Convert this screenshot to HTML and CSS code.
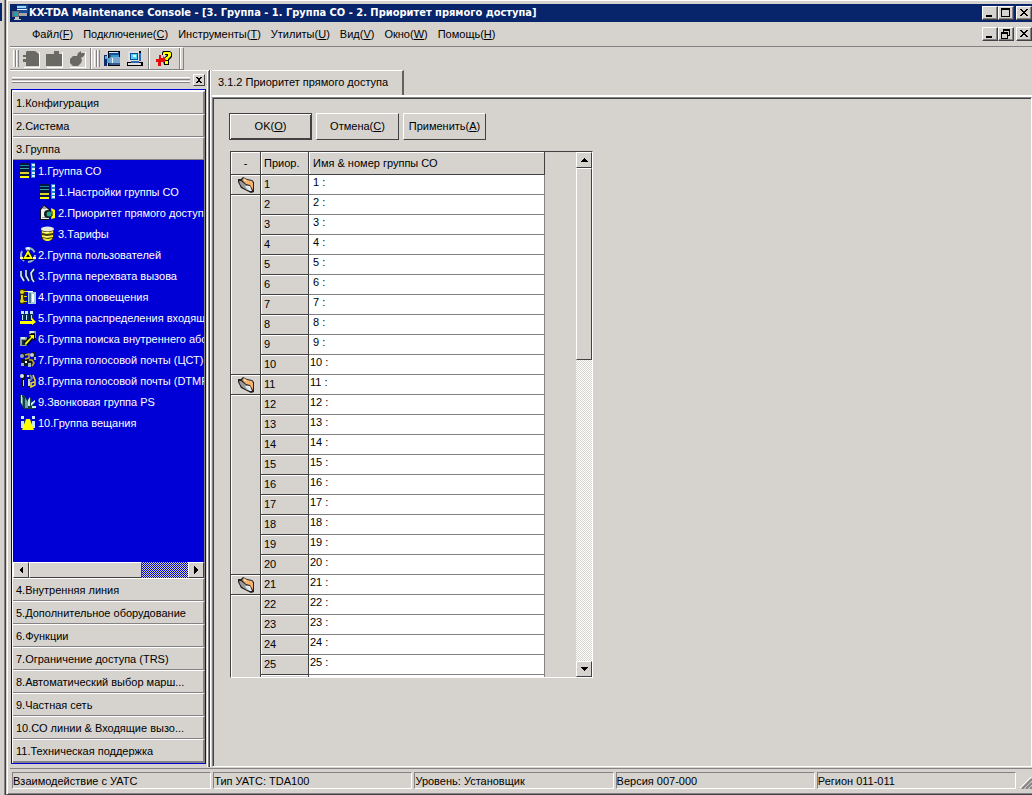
FILE: index.html
```html
<!DOCTYPE html>
<html lang="ru">
<head>
    <meta charset="utf-8">
    <title>KX-TDA Maintenance Console</title>
    <link rel="stylesheet" href="styles.css">
</head>
<body>
    <!-- Icons -->
    <svg class="sprites" aria-hidden="true">
        <symbol id="i-app" viewBox="0 0 16 16">
            <path fill="#184c94" d="M5 0h11v8H5z"/><path fill="#9cd7f7" d="M5 1h9v2H5z"/><path fill="#e7f3ff" d="M5 4h10v1H5z"/>
            <path fill="#6b6d73" d="M0 6h7v6H0z"/><path fill="#a5a6a5" d="M7 8h8v3H7z"/><path fill="#299cb5" d="M2 7h4v4H2z"/>
            <path fill="#c6c7c6" d="M3 12h4v2H3zM2 14h7v1H2z"/>
        </symbol>
        <symbol id="i-import" viewBox="0 0 16 16"><path d="M4 0h8l4 3v12H3v-4H0V8h3V6H0V4h3V1z"/></symbol>
        <symbol id="i-folder" viewBox="0 0 16 16"><path d="M0 3h8V0h5v3h3v12H0z"/></symbol>
        <symbol id="i-bomb" viewBox="0 0 16 16"><path d="M9 2l3-2v2h4l-1 3-3 2 1 2-1 3-3 3H4l-3-3V8l3-3h4z"/></symbol>
        <symbol id="i-pbx" viewBox="0 0 16 16">
            <path fill="#000" d="M4 0h12v15H4z"/><path fill="#184c94" d="M5 1h10v13H5z"/><path fill="#cef" d="M5 1h9v1H5z"/><path fill="#39c" d="M7 4h8v2H7z"/>
            <path fill="#7ba6d0" d="M6 6h10v6H6z"/><path fill="#102d73" d="M0 4h3v11H0z"/><path fill="#5ac" d="M1 5h2v3H1zM3 7h3v5H3z"/><path fill="#dff" d="M8 7h1v5H8z"/><path fill="#315d94" d="M7 12h9v2H7z"/>
        </symbol>
        <symbol id="i-pc" viewBox="0 0 16 16">
            <path fill="#000" d="M3 0h11v10H3zM0 11h16v4H0z"/><path fill="#dedfde" d="M1 0h11v10H1zM1 12h13v2H1z"/><path fill="#104c94" d="M3 2h8v7H3z"/>
            <path fill="#42d7f7" d="M4 3h6v5H4z"/><path fill="#fff" d="M6 4h3v2H6z"/><path fill="#2869b7" d="M12 2h2v8h-2zM4 10h8v2H4z"/>
        </symbol>
        <symbol id="i-help" viewBox="0 0 16 16">
            <path fill="#000" d="M7 0h7l2 2v4l-3 3v5H8V7l3-3H6V2z"/><path fill="#ff0" d="M8 1h6l1 1v3l-3 3v1H9V7l3-2V3H9v1H7V2zM9 10h3v3H9z"/>
            <path fill="#e70808" d="M3 4h2v3h2V5l3 4-3 4v-2H5v4H2v-4H0V8h3z"/>
        </symbol>
        <symbol id="i-co" viewBox="0 0 16 16">
            <path fill="#031840" d="M0 0h9v15H0z"/><path fill="#188ca5" d="M0 2h9v1H0z"/><path fill="#42a59b" d="M0 5h9v1H0z"/><path fill="#dcd326" d="M0 9h9v2H0z"/><path fill="#ffff08" d="M0 13h9v2H0z"/>
            <path fill="#188ccc" d="M11 0h4v15h-4z"/><path fill="#d7f1ff" d="M12 1h3v2h-3zM12 5h3v2h-3zM12 9h3v2h-3zM12 12h3v2h-3z"/>
        </symbol>
        <symbol id="i-prio" viewBox="0 0 16 16">
            <path fill="#10101d" d="M0 15V4l4-4 6 4v11z"/><path fill="#f0f0f0" d="M1 14V5l3-4 5 4v9z"/><path fill="#9c9e9c" d="M3 2h3v2H3zM2 12h7v1H2z"/>
            <circle cx="8" cy="9" r="4" fill="#10201d"/><circle cx="9" cy="9" r="2.5" fill="#29a58c"/><path fill="#ff0" d="M11 3l4 2v8l-4 1 1-4z"/><path fill="#8c8410" d="M12 6h1v5h-1z"/>
        </symbol>
        <symbol id="i-tariff" viewBox="0 0 16 16">
            <path fill="#423c00" d="M1 2h13v6l-1 5-3 2H5l-3-2-1-5z"/><ellipse cx="7.5" cy="3" rx="6.5" ry="2.5" fill="#e7e7de"/><path fill="#f7e739" d="M2 5l5 2 6-2v2l-6 1-5-1zM2 9l5 1 6-1v2l-6 1-5-1zM3 12l5 1 4-1v1l-3 2H6l-3-2z"/><path fill="#ffffa5" d="M4 6h5v1H4zM4 10h5v1H4z"/>
        </symbol>
        <symbol id="i-users" viewBox="0 0 16 16">
            <circle cx="8" cy="8" r="7" fill="none" stroke="#94b5bd" stroke-width="2" stroke-dasharray="11 4"/><circle cx="8" cy="2" r="2" fill="#e7f7ff"/><path fill="#000" d="M8 2l6 11H2z"/><path fill="#ff0" fill-rule="evenodd" d="M8 3l5 9H3zM8 7l-2 3h4z"/><path fill="#ffff9c" d="M0 10h3v2H0zM13 10h3v2h-3z"/>
        </symbol>
        <symbol id="i-pickup" viewBox="0 0 16 16">
            <path fill="none" stroke="#081852" stroke-width="3" d="M2 3v5l3 5M7 2v6l3 5M14 1l-2 4 1 6 2 2"/><path fill="none" stroke="#d6efff" stroke-width="1.6" d="M1 3v5l3 5M6 2v6l3 5M14 1l-3 4 1 6 2 3"/>
        </symbol>
        <symbol id="i-page" viewBox="0 0 16 16">
            <path fill="#2b2900" d="M0 0h6v15H0z"/><circle cx="2" cy="3" r="2" fill="#e7d518"/><circle cx="2" cy="12" r="2" fill="#e7d518"/><path fill="#e7d518" d="M1 6h2v4H1zM4 2h3v1H4zM4 7h3v1H4zM4 12h3v1H4z"/>
            <path fill="#a5cede" d="M8 3h8v12H8z"/><path fill="#527b9c" d="M9 4h2v10H9z"/><path fill="#f7ffff" d="M12 5h2v8h-2zM7 2h6v1H7z"/>
        </symbol>
        <symbol id="i-icd" viewBox="0 0 16 16">
            <path fill="#102d52" d="M2 3h3v7H2zM6 3h3v7H6zM10 3h4v7h-4z"/><path fill="#bde7f7" d="M1 1h3v3H1zM5 1h3v3H5zM10 1h3v3h-3zM2 5h1v5H2zM6 5h1v5H6zM11 5h1v5h-1z"/><path fill="#ff0" d="M0 11h12V8l4 4-4 3v-1H0z"/>
        </symbol>
        <symbol id="i-hunt" viewBox="0 0 16 16">
            <path fill="#8c9ea5" d="M9 0h7v7H9zM0 6h7v9H0z"/><path fill="#18283b" d="M11 2h4v4h-4zM2 9h3v5H2z"/><path fill="#cee7e7" d="M10 0h4v2h-4zM1 6h4v2H1z"/>
            <path fill="#000" d="M4 11l6-6-2-2h7v7l-2-2-6 7z"/><path fill="#ff0" d="M5 12l6-6-1-2h4v4l-2-1-6 7z"/>
        </symbol>
        <symbol id="i-vm1" viewBox="0 0 16 16">
            <path fill="#101820" d="M2 1h3v4H2zM11 0h4v5h-4zM2 7h12v7H2z"/><circle cx="2" cy="4" r="2" fill="#94a5b5"/><circle cx="12" cy="3" r="2" fill="#c6cfd6"/><path fill="#a5b5bd" d="M1 11h3v3H1zM8 11h3v4H8zM14 5h2v3h-2z"/><path fill="none" stroke="#c5ad29" stroke-width="1.5" d="M5 3l4-1v4L5 7M9 8h3l2 3-2 3"/><path fill="#f7ffff" d="M5 9h2v2H5z"/>
        </symbol>
        <symbol id="i-vm2" viewBox="0 0 16 16">
            <path fill="#101010" d="M1 1h4v5H1zM2 6h2v8H2zM7 5h3v9H7z"/><circle cx="2" cy="3" r="2" fill="#d6e7ee"/><path fill="#c6d7de" d="M3 7h1v6H3zM7 2h2v2H7zM8 6h2v7H8z"/><path fill="none" stroke="#6b8c8c" stroke-width="2" d="M10 2l2 3-2 3"/><path fill="none" stroke="#e7d529" stroke-width="1.6" d="M13 2l2 5v5l-4 2v-4l3-1"/>
        </symbol>
        <symbol id="i-ps" viewBox="0 0 16 16">
            <path fill="#153d4a" d="M0 1h4l4 5 3-3 1 5 3 7H4l-4-6z"/><path fill="#6ba5a5" d="M1 1l2 3v8L1 9zM5 4l3 4v6H5z"/><path fill="#c6efe7" d="M1 1h1v8H1zM8 6l2-3v9H8zM11 9l4-3v2l-4 4zM12 12h4v2h-4z"/>
        </symbol>
        <symbol id="i-bcast" viewBox="0 0 16 16">
            <path fill="#c6e7ff" d="M1 1h3v3H1zM12 1h3v3h-3zM1 6h3v7H1zM12 6h3v7h-3z"/><path fill="#102d73" d="M4 5h1v8H4zM11 5h1v8h-1z"/><path fill="#ff0" d="M6 4h4l1 3 3 8H2l3-8z"/>
        </symbol>
        <symbol id="i-book" viewBox="0 0 16 16">
            <path fill="#212021" d="M0 2h3l2-2 4 2 5 1 2 2v10l-3 1-4-2-6-3-3-6z"/><path fill="#f7b26b" d="M4 3l2-2 3 2 5 1 1 2v7l-3-5-4-1z"/><path fill="#ffe7bd" d="M6 2l3 1-1 1-2-1z"/>
            <path fill="#9c9a9c" d="M1 4h2l5 4 4 1 1 5-4-1-5-3-2-3z"/><path fill="#e7e7ef" d="M7 9l5 0 2 5-2 0-3-2z"/>
        </symbol>
    </svg>

    <div class="desktop">
        <div class="behind"><div class="behind-title"></div></div>
        <div class="window">
            <header class="title-bar">
                <svg class="icon"><use href="#i-app"/></svg>
                <h1>KX-TDA Maintenance Console - [3. Группа - 1. Группа CO - 2. Приоритет прямого доступа]</h1>
                <div class="win-buttons">
                    <button aria-label="Свернуть"><svg viewBox="0 0 12 10"><path d="M2 7h6v2H2z"/></svg></button>
                    <button aria-label="Развернуть"><svg viewBox="0 0 12 10"><path fill-rule="evenodd" d="M1 0h9v9H1zM2 2v6h7V2z"/></svg></button>
                    <button class="close" aria-label="Закрыть"><svg viewBox="0 0 12 10"><path d="M2 1h2v1h1v1h2V2h1V1h2v1H9v1H8v1H7v1h1v1h1v1h1v1H8V7H7V6H5v1H4v1H2V7h1V6h1V5h1V4H4V3H3V2H2z"/></svg></button>
                </div>
            </header>

            <nav class="menu-bar">
                <button>Файл(<u>F</u>)</button>
                <button>Подключение(<u>C</u>)</button>
                <button>Инструменты(<u>T</u>)</button>
                <button>Утилиты(<u>U</u>)</button>
                <button>Вид(<u>V</u>)</button>
                <button>Окно(<u>W</u>)</button>
                <button>Помощь(<u>H</u>)</button>
                <div class="win-buttons">
                    <button aria-label="Свернуть окно"><svg viewBox="0 0 12 10"><path d="M2 7h6v2H2z"/></svg></button>
                    <button aria-label="Восстановить окно"><svg viewBox="0 0 12 10"><path fill-rule="evenodd" d="M3 0h7v7H8v3H1V3h2zM4 2v1h4v3h1V2zM2 5v4h5V5z"/></svg></button>
                    <button class="close" aria-label="Закрыть окно"><svg viewBox="0 0 12 10"><path d="M2 1h2v1h1v1h2V2h1V1h2v1H9v1H8v1H7v1h1v1h1v1h1v1H8V7H7V6H5v1H4v1H2V7h1V6h1V5h1V4H4V3H3V2H2z"/></svg></button>
                </div>
            </nav>

            <div class="toolbar">
                <div class="tool-group">
                    <span class="grip"></span>
                    <button disabled aria-label="Импорт"><svg class="icon"><use href="#i-import"/></svg></button>
                    <button disabled aria-label="Открыть"><svg class="icon"><use href="#i-folder"/></svg></button>
                    <button disabled aria-label="Отключить"><svg class="icon"><use href="#i-bomb"/></svg></button>
                </div>
                <div class="tool-group">
                    <span class="grip"></span>
                    <button aria-label="УАТС"><svg class="icon"><use href="#i-pbx"/></svg></button>
                    <button aria-label="Компьютер"><svg class="icon"><use href="#i-pc"/></svg></button>
                </div>
                <div class="tool-group tool-help">
                    <button aria-label="Справка"><svg class="icon"><use href="#i-help"/></svg></button>
                </div>
                <span class="tool-end"></span>
            </div>

            <div class="workspace">
                <aside class="side">
                    <div class="side-head">
                        <div class="side-grip"></div>
                        <button aria-label="Закрыть панель"><svg viewBox="0 0 8 8"><path d="M1 1h2v1h2V1h2v1H6v1H5v2h1v1h1v1H5V6H3v1H1V6h1V5h1V3H2V2H1z"/></svg></button>
                    </div>
                    <div class="accordion">
                        <button class="section">1.Конфигурация</button>
                        <button class="section">2.Система</button>
                        <button class="section">3.Группа</button>
                        <ul class="tree">
                            <li><a href="#"><svg class="icon"><use href="#i-co"/></svg>1.Группа СО</a></li>
                            <li class="sub"><a href="#"><svg class="icon"><use href="#i-co"/></svg>1.Настройки группы СО</a></li>
                            <li class="sub"><a href="#"><svg class="icon"><use href="#i-prio"/></svg>2.Приоритет прямого доступа</a></li>
                            <li class="sub"><a href="#"><svg class="icon"><use href="#i-tariff"/></svg>3.Тарифы</a></li>
                            <li><a href="#"><svg class="icon"><use href="#i-users"/></svg>2.Группа пользователей</a></li>
                            <li><a href="#"><svg class="icon"><use href="#i-pickup"/></svg>3.Группа перехвата вызова</a></li>
                            <li><a href="#"><svg class="icon"><use href="#i-page"/></svg>4.Группа оповещения</a></li>
                            <li><a href="#"><svg class="icon"><use href="#i-icd"/></svg>5.Группа распределения входящих</a></li>
                            <li><a href="#"><svg class="icon"><use href="#i-hunt"/></svg>6.Группа поиска внутреннего абонента</a></li>
                            <li><a href="#"><svg class="icon"><use href="#i-vm1"/></svg>7.Группа голосовой почты (ЦСТ)</a></li>
                            <li><a href="#"><svg class="icon"><use href="#i-vm2"/></svg>8.Группа голосовой почты (DTMF)</a></li>
                            <li><a href="#"><svg class="icon"><use href="#i-ps"/></svg>9.Звонковая группа PS</a></li>
                            <li><a href="#"><svg class="icon"><use href="#i-bcast"/></svg>10.Группа вещания</a></li>
                        </ul>
                        <div class="scroll-h">
                            <button aria-label="Влево"><svg viewBox="0 0 8 8"><path d="M2 4l4-4v8z"/></svg></button>
                            <div class="thumb"></div>
                            <button class="last" aria-label="Вправо"><svg viewBox="0 0 8 8"><path d="M6 4L2 0v8z"/></svg></button>
                        </div>
                        <button class="section">4.Внутренняя линия</button>
                        <button class="section">5.Дополнительное оборудование</button>
                        <button class="section">6.Функции</button>
                        <button class="section">7.Ограничение доступа (TRS)</button>
                        <button class="section">8.Автоматический выбор марш...</button>
                        <button class="section">9.Частная сеть</button>
                        <button class="section">10.СО линии &amp; Входящие вызо...</button>
                        <button class="section">11.Техническая поддержка</button>
                    </div>
                </aside>

                <main class="main">
                    <button class="tab">3.1.2 Приоритет прямого доступа</button>
                    <section class="page">
                        <div class="actions">
                            <button class="default">OK(<u>O</u>)</button>
                            <button>Отмена(<u>C</u>)</button>
                            <button>Применить(<u>A</u>)</button>
                        </div>
                        <div class="grid">
                            <div class="grid-view">
                                <table>
                                    <thead>
                                        <tr>
                                            <th class="col-group">-</th>
                                            <th class="col-prior">Приор.</th>
                                            <th class="col-name">Имя &amp; номер группы СО</th>
                                        </tr>
                                    </thead>
                                    <tbody id="rows"></tbody>
                                </table>
                            </div>
                            <div class="scroll-v">
                                <button aria-label="Вверх"><svg viewBox="0 0 8 8"><path d="M4 2l4 4H0z"/></svg></button>
                                <div class="thumb"></div>
                                <button class="last" aria-label="Вниз"><svg viewBox="0 0 8 8"><path d="M4 6l4-4H0z"/></svg></button>
                            </div>
                        </div>
                    </section>
                </main>
            </div>

            <footer class="status-bar">
                <span>Взаимодействие с УАТС</span>
                <span>Тип УАТС: TDA100</span>
                <span>Уровень: Установщик</span>
                <span>Версия 007-000</span>
                <span>Регион 011-011</span>
                <svg class="resizer" viewBox="0 0 12 12"><path stroke="#fff" d="M0 11L11 0M4 11l7-7M8 11l3-3"/><path stroke="#848284" stroke-width="2" d="M2 12L12 2M6 12l6-6M10 12l2-2"/></svg>
            </footer>
        </div>
    </div>

    <script>
        // Rows come in groups of ten, each opened by an icon cell
        const rows = document.getElementById('rows');
        const total = 26;

        for (let i = 1; i <= total; i++) {
            const row = document.createElement('tr');
            const pos = (i - 1) % 10;
            let html = '';

            if (pos === 0) {
                html += '<td class="book"><svg class="icon"><use href="#i-book"/></svg></td>';
            } else if (pos === 1) {
                html += '<td class="blank" rowspan="9"></td>';
            }
            html += '<td class="prior">' + i + '</td>';
            html += '<td class="name">' + String(i).padStart(2, ' ') + ' :</td>';

            row.innerHTML = html;
            rows.appendChild(row);
        }
    </script>
</body>
</html>
```
FILE: styles.css
```css
* {
    box-sizing: border-box;
}

body {
    margin: 0;
    background-color: #d6d3ce;
    color: #000;
    font-family: "Liberation Sans", Arial, sans-serif;
    font-size: 11px;
    line-height: 14px;
}

button {
    margin: 0;
    padding: 0;
    border: none;
    border-radius: 0;
    background-color: #d6d3ce;
    color: #000;
    font: inherit;
    white-space: nowrap;
}

.sprites {
    display: none;
}

.icon {
    display: block;
    flex: none;
    width: 16px;
    height: 16px;
}

.desktop {
    display: flex;
    height: 100vh;
    min-height: 720px;
    overflow: hidden;
}

/* Edge of the window lying underneath */
.behind {
    flex: none;
    width: 6px;
    padding-top: 3px;
    border-right: 1px solid #424142;
    box-shadow: inset -1px 0 #848284;
}

.behind-title {
    width: 2px;
    height: 18px;
    background-color: #08246b;
}

.window {
    display: flex;
    flex: 1;
    flex-direction: column;
    min-width: 0;
    padding: 3px 0 1px 3px;
    border-bottom: 1px solid #424142;
    border-left: 1px solid #d6d3ce;
    box-shadow: inset 1px 1px #fff, inset 0 -1px #848284;
}

/* Title bar */
.title-bar {
    display: flex;
    align-items: center;
    flex: none;
    height: 18px;
    margin-top: 1px;
    padding-left: 2px;
    background-color: #08246b;
    color: #fff;
}

.title-bar h1 {
    margin: 0 0 0 1px;
    font-family: "DejaVu Sans Condensed", "DejaVu Sans", sans-serif;
    font-size: 11px;
    font-stretch: condensed;
    font-weight: bold;
    white-space: nowrap;
}

.win-buttons {
    display: flex;
    margin-left: auto;
}

.win-buttons button {
    width: 16px;
    height: 14px;
    padding: 1px;
    border: 1px solid;
    border-color: #fff #424142 #424142 #fff;
    box-shadow: inset -1px -1px #848284;
}

.win-buttons .close {
    margin-left: 2px;
}

.win-buttons svg {
    display: block;
    width: 12px;
    height: 10px;
    shape-rendering: crispEdges;
}

/* Menu */
.menu-bar {
    display: flex;
    align-items: center;
    flex: none;
    gap: 10px;
    height: 25px;
    padding-left: 22px;
    border-bottom: 1px solid #848284;
}

.menu-bar .win-buttons button:first-child {
    margin-left: 3px;
}

/* Toolbar */
.toolbar {
    display: flex;
    flex: none;
    align-self: flex-start;
    height: 23px;
    border-top: 1px solid #fff;
    border-right: 1px solid #848284;
    border-bottom: 1px solid #848284;
}

.tool-group {
    display: flex;
    align-items: center;
    gap: 7px;
    padding: 0 5px 0 3px;
    border-right: 1px solid #848284;
    box-shadow: 1px 0 #fff;
}

.tool-help {
    padding: 0 7px;
}

.tool-group button:disabled {
    filter: drop-shadow(1px 1px #fff);
    fill: #6b6963;
}

.grip {
    width: 6px;
    height: 17px;
    margin-right: -3px;
    background: linear-gradient(90deg, #fff 1px, #d6d3ce 1px 2px, #848284 2px 3px, #fff 3px 4px, #d6d3ce 4px 5px, #848284 5px);
}

.tool-end {
    width: 3px;
}

/* Side panel */
.workspace {
    display: flex;
    flex: 1;
    min-height: 0;
}

.side {
    display: flex;
    flex: none;
    flex-direction: column;
    width: 200px;
    padding: 1px 3px 3px 1px;
    border-right: 1px solid #424142;
    box-shadow: inset 0 1px #fff, inset -1px 0 #848284, inset -2px 0 #fff;
}

.side-head {
    display: flex;
    align-items: center;
    flex: none;
    gap: 3px;
    height: 18px;
    padding: 0 1px;
}

.side-grip {
    flex: 1;
    height: 6px;
    border-top: 1px solid #fff;
    border-bottom: 1px solid #848284;
    background: linear-gradient(#d6d3ce 1px, #848284 1px 2px, #d6d3ce 2px 3px, #fff 3px);
}

.side-head button {
    width: 12px;
    height: 12px;
    padding: 1px;
    border: 1px solid;
    border-color: #fff #424142 #424142 #fff;
}

.side-head svg {
    display: block;
    width: 8px;
    height: 8px;
    shape-rendering: crispEdges;
}

.accordion {
    display: flex;
    flex: 1;
    flex-direction: column;
    min-height: 0;
    padding: 1px 0 1px 1px;
    border: 1px solid #0000d6;
    box-shadow: inset 1px 1px #fff, inset 0 -1px #848284;
}

.section {
    flex: none;
    height: 23px;
    padding: 0 3px;
    border-top: 1px solid #fff;
    border-right: 2px solid #848284;
    border-bottom: 1px solid #848284;
    text-align: left;
}

.tree {
    flex: 1;
    min-height: 0;
    margin: 0;
    padding: 0 0 0 7px;
    border-right: 1px solid #848284;
    overflow: hidden;
    background-color: #0000d6;
    list-style: none;
}

.tree .sub {
    padding-left: 20px;
}

.tree a {
    display: flex;
    align-items: center;
    gap: 2px;
    height: 21px;
    color: #fff;
    text-decoration: none;
    white-space: nowrap;
}

/* Scroll bars */
.scroll-h,
.scroll-v {
    display: flex;
    flex: none;
    background: repeating-conic-gradient(#fff 0 25%, #d6d3ce 0 50%) 0 0 / 2px 2px;
}

.scroll-h {
    height: 16px;
    border-right: 1px solid #848284;
    background: repeating-conic-gradient(#0000d6 0 25%, #d6d3ce 0 50%) 0 0 / 2px 2px;
}

.scroll-v {
    flex-direction: column;
    width: 16px;
}

.scroll-h button,
.scroll-v button,
.thumb {
    flex: none;
    width: 16px;
    height: 16px;
    border: 1px solid;
    border-color: #fff #424142 #424142 #fff;
    background-color: #d6d3ce;
}

.scroll-h svg,
.scroll-v svg {
    display: block;
    width: 8px;
    height: 8px;
    margin: auto;
    shape-rendering: crispEdges;
}

.scroll-h .thumb {
    width: 59%;
}

.scroll-v .thumb {
    width: 16px;
    height: 192px;
}

.scroll-h .last {
    margin-left: auto;
}

.scroll-v .last {
    margin-top: auto;
}

/* Main area */
.main {
    display: flex;
    flex: 1;
    flex-direction: column;
    min-width: 0;
    padding-left: 1px;
    border-left: 1px solid #fff;
}

.tab {
    align-self: flex-start;
    flex: none;
    height: 25px;
    padding: 0 14px 3px 6px;
    border-top: 1px solid #fff;
    border-right: 2px solid #63615a;
}

.page {
    flex: 1;
    margin-top: 2px;
    padding: 15px 16px;
    border: 1px solid;
    border-color: #848284 #fff #fff #848284;
    box-shadow: 0 -2px #fff, inset 1px 1px #424142;
}

.actions {
    display: flex;
    gap: 4px;
    margin-bottom: 11px;
}

.actions button {
    width: 83px;
    height: 27px;
    padding-bottom: 1px;
    border: 1px solid;
    border-color: #fff #424142 #424142 #fff;
}

.actions .default {
    border-color: #424142;
    box-shadow: inset 1px 1px #fff, inset -1px -1px #424142;
}

/* Priority grid */
.grid {
    display: flex;
    width: 363px;
    height: 527px;
    margin-left: 1px;
    border: 1px solid;
    border-color: #424142 #fff #fff #424142;
}

.grid-view {
    flex: 1;
    overflow: hidden;
}

.grid table {
    width: 314px;
    border-collapse: separate;
    border-spacing: 0;
    table-layout: fixed;
}

.grid th,
.grid td {
    height: 20px;
    padding: 0 0 2px 3px;
    border-right: 1px solid #424142;
    border-bottom: 1px solid #424142;
    box-shadow: inset 1px 1px #fff;
    font-weight: normal;
    text-align: left;
}

.grid th {
    height: 23px;
    padding: 0 0 0 4px;
}

.grid .col-group {
    width: 30px;
    padding: 0;
    text-align: center;
}

.grid .col-prior {
    width: 48px;
    padding-left: 3px;
}

.grid .book {
    padding: 0 0 0 7px;
}

.grid .name {
    padding: 0 0 5px 1px;
    border-color: #848284;
    box-shadow: none;
    background-color: #fff;
    white-space: pre;
}

/* Status bar */
.status-bar {
    display: grid;
    grid-template-columns: repeat(5, 1fr) 14px;
    flex: none;
    gap: 2px;
    height: 25px;
    margin-top: 1px;
    padding: 3px 0 4px 2px;
    border-top: 1px solid #848284;
}

.status-bar span {
    padding-top: 1px;
    border: 1px solid;
    border-color: #848284 #fff #fff #848284;
    overflow: hidden;
    white-space: nowrap;
}

.resizer {
    align-self: end;
    justify-self: end;
    width: 12px;
    height: 12px;
}
```
